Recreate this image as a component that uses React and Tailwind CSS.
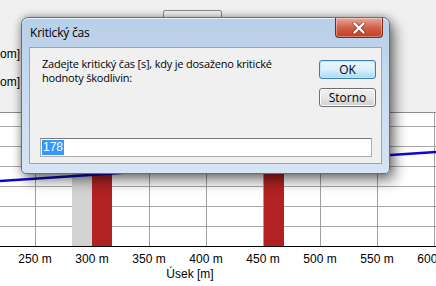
import React from "react";

const xs = [35, 92, 149, 206, 263, 320, 377, 434];
const labels = ["250 m", "300 m", "350 m", "400 m", "450 m", "500 m", "550 m", "600 m"];
const hs = [13, 33, 53, 73, 93, 113];

function Chart() {
  return (
    <svg width="436" height="173" viewBox="0 0 436 173" className="block">
      <rect x="0" y="0" width="436" height="173" fill="#ffffff" />
      {hs.map((y) => (
        <line key={"h" + y} x1="0" x2="436" y1={y + 0.5} y2={y + 0.5} stroke="#a8a8a8" strokeWidth="1" />
      ))}
      {xs.map((x) => (
        <line key={"v" + x} x1={x + 0.5} x2={x + 0.5} y1="0" y2="133" stroke="#a0a0a0" strokeWidth="1" />
      ))}
      <rect x="72" y="0" width="20" height="133" fill="#d3d3d3" />
      <rect x="92" y="0" width="20" height="133" fill="#b22222" />
      <rect x="264" y="0" width="20" height="133" fill="#b22222" />
      <line x1="0" y1="68" x2="436" y2="39" stroke="#0a0acc" strokeWidth="2.5" />
      <line x1="0" x2="436" y1="133.5" y2="133.5" stroke="#000000" strokeWidth="1" />
      {xs.map((x, i) => (
        <text
          key={"t" + x}
          x={x}
          y="150"
          textAnchor="middle"
          fontFamily="'Liberation Sans', Arial, sans-serif"
          fontSize="12"
          fill="#000"
        >
          {labels[i]}
        </text>
      ))}
      <text x="190" y="165" textAnchor="middle" fontFamily="'Liberation Sans', Arial, sans-serif" fontSize="12" fill="#000">
        Úsek [m]
      </text>
    </svg>
  );
}

function CloseButton() {
  return (
    <div className="w-[48px] h-[20px] rounded-b-[4px] border border-t-0 border-[#7a2a1c] bg-gradient-to-b from-[#e6a89c] via-[#d2604a] to-[#c13e22] flex items-center justify-center shadow-[inset_0_0_0_1px_rgba(255,255,255,0.35)]">
      <svg width="14" height="12" viewBox="0 0 14 12">
        <path d="M2.5 1.5 L11.5 10.5 M11.5 1.5 L2.5 10.5" stroke="#5a1a10" strokeWidth="4" strokeLinecap="round" opacity="0.45" />
        <path d="M2.5 1.5 L11.5 10.5 M11.5 1.5 L2.5 10.5" stroke="#ffffff" strokeWidth="2.4" strokeLinecap="round" />
      </svg>
    </div>
  );
}

function WinButton({ children, primary }) {
  return (
    <div
      className={
        "w-[57px] h-[19px] rounded-[3px] border flex items-center justify-center text-[12px] leading-none text-black " +
        (primary
          ? "border-[#3c7fb1] bg-gradient-to-b from-[#eaf6fd] via-[#d9f0fc] to-[#a7d9f5] shadow-[inset_0_0_0_1px_#c6e6f8]"
          : "border-[#707070] bg-gradient-to-b from-[#f2f2f2] via-[#e6e6e6] to-[#cfcfcf] shadow-[inset_0_0_0_1px_#fcfcfc]")
      }
    >
      {children}
    </div>
  );
}

export default function App() {
  return (
    <div className="relative w-[436px] h-[286px] overflow-hidden bg-white font-['Liberation_Sans',Arial,sans-serif]">
      <div className="h-[113px] bg-[#f0f0f0] border-b border-[#8c8c8c] flex flex-col">
        <div className="ml-[163px] mt-[10px] w-[59px] h-[20px] border border-[#8a8a8a] rounded-[2px] bg-[#f4f4f4]" />
        <div className="text-[12px] leading-[14px] text-black mt-[17px]">om]</div>
        <div className="text-[12px] leading-[14px] text-black mt-[14px]">om]</div>
      </div>
      <Chart />

      {/* Dialog window */}
      <div className="absolute left-[21px] top-[17px] w-[369px] h-[157px] rounded-t-[7px] rounded-b-[5px] border border-[#5d7189] bg-gradient-to-b from-[#b7cfe9] via-[#cadcf0] to-[#d6e4f3] shadow-[0_0_8px_rgba(0,0,0,0.35),5px_7px_14px_rgba(0,0,0,0.45)] flex flex-col">
        <div className="h-[29px] flex items-start justify-between pr-[6px] shadow-[inset_0_1px_0_rgba(255,255,255,0.7)] rounded-t-[7px]">
          <div className="pl-[8px] pt-[7px] text-[12px] leading-[15px] text-black font-['Open_Sans',sans-serif] tracking-[-0.2px]">
            Kritický čas
          </div>
          <CloseButton />
        </div>
        <div className="mx-[7px] mb-[9px] flex-1 border border-[#8fa6bf] bg-[#f0f0f0] flex flex-col font-['Open_Sans',sans-serif]">
          <div className="flex">
            <div className="flex-1 pl-[12px] pt-[9px] text-[11px] leading-[14px] text-black tracking-[-0.2px]">
              Zadejte kritický čas [s], kdy je dosaženo kritické
              <br />
              hodnoty škodlivin:
            </div>
            <div className="pt-[12px] pr-[5px] flex flex-col gap-[9px]">
              <WinButton primary>OK</WinButton>
              <WinButton>Storno</WinButton>
            </div>
          </div>
          <div className="mt-auto mb-[6px] ml-[10px] mr-[9px] h-[19px] border border-[#abadb3] border-t-[#7a7a7a] bg-white flex items-center pl-[1px]">
            <span className="bg-[#3399ff] text-white text-[12px] leading-[15px] px-[1px] font-['Liberation_Sans',Arial,sans-serif]">178</span>
          </div>
        </div>
      </div>
    </div>
  );
}
